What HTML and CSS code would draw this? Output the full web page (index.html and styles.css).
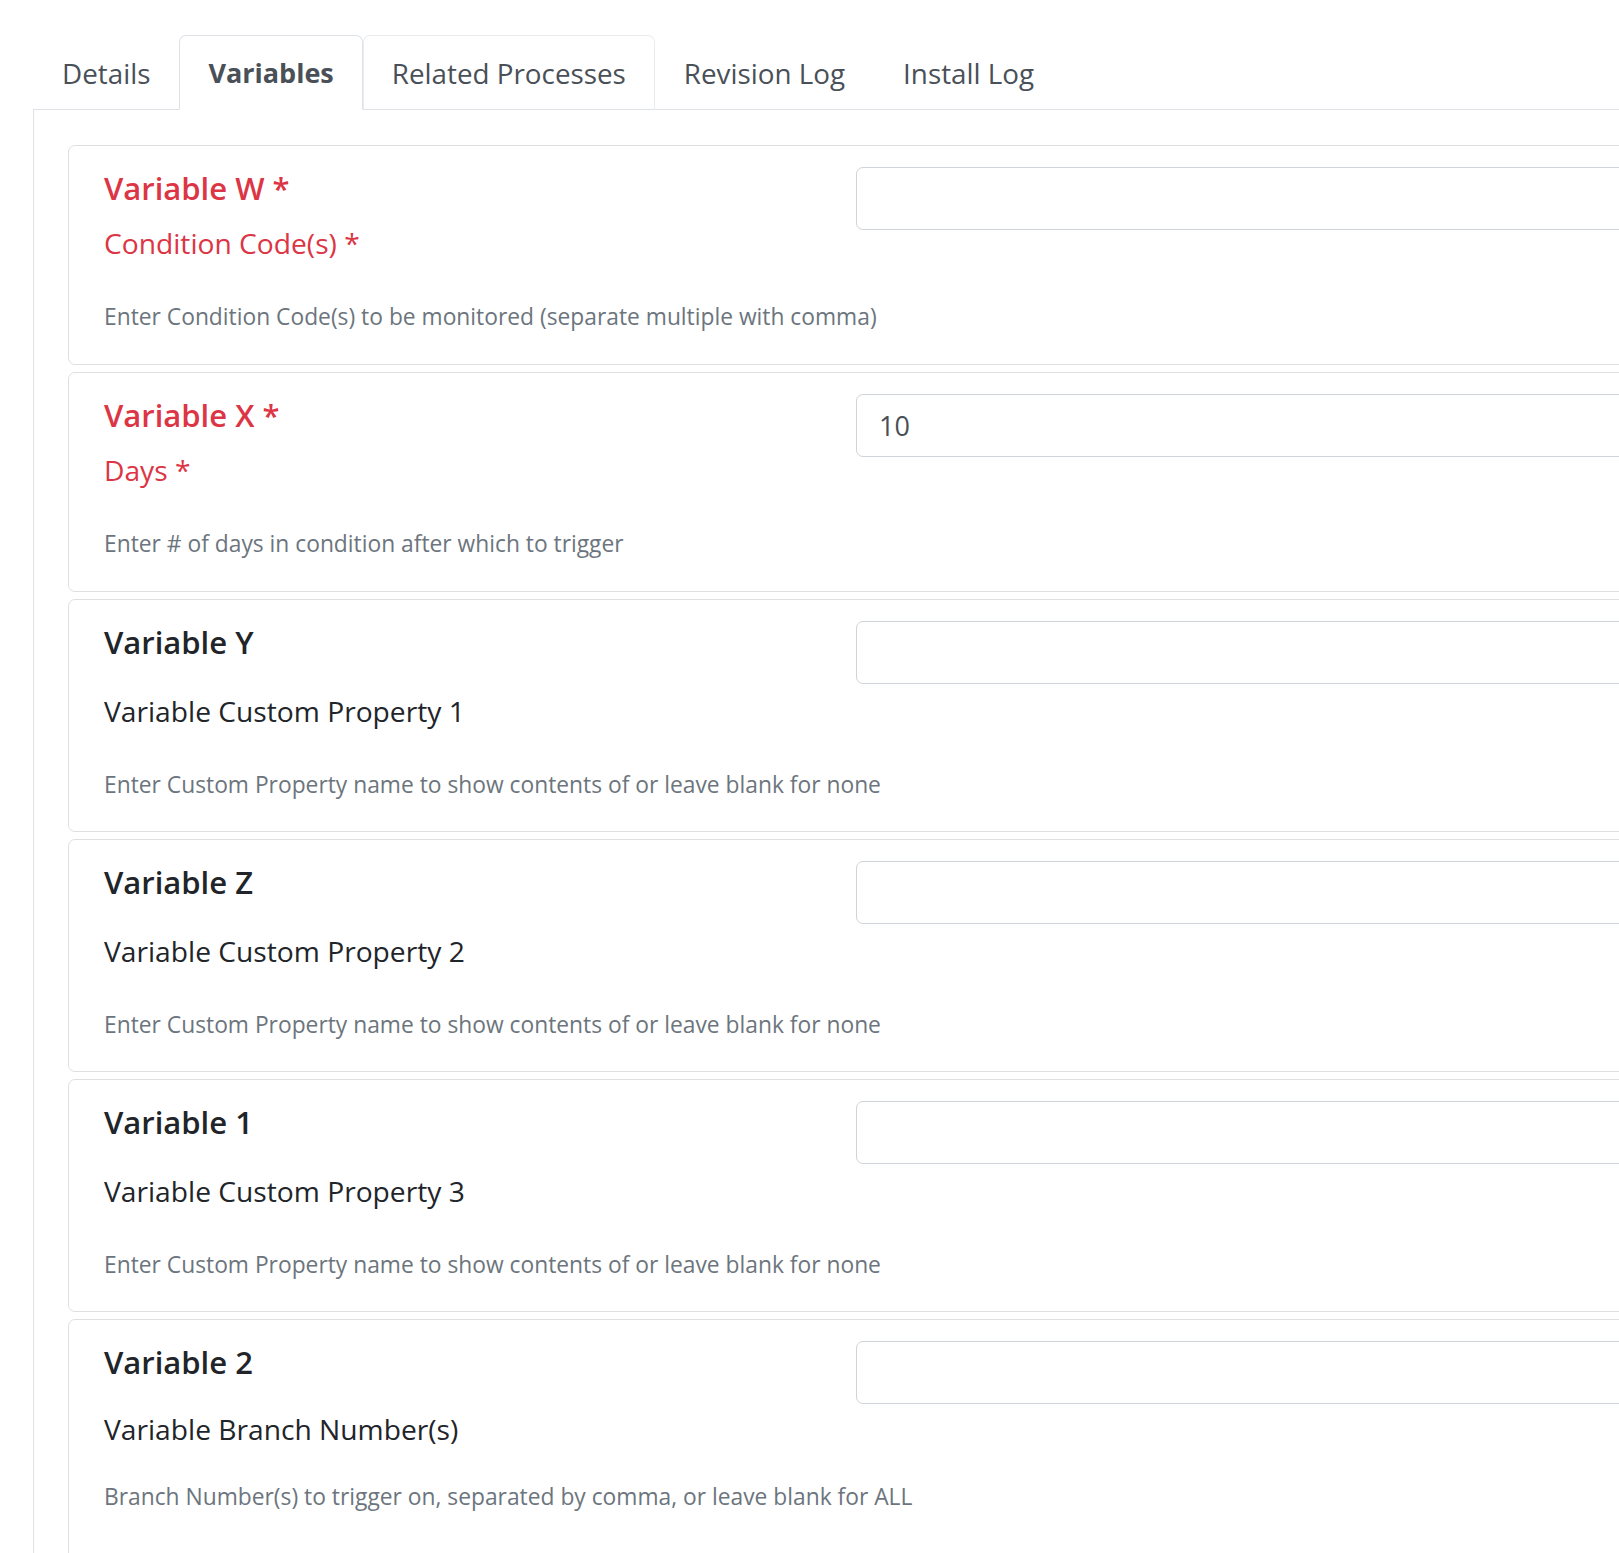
FILE: index.html
```html
<!DOCTYPE html>
<html lang="en">
<head>
    <meta charset="utf-8" />
    <title>Process Variables</title>
    <link rel="stylesheet" href="styles.css">
</head>
<body>
<div class="page">
    <ul class="nav-tabs">
        <li><a class="tab">Details</a></li>
        <li><a class="tab tab-active">Variables</a></li>
        <li><a class="tab tab-hover">Related Processes</a></li>
        <li><a class="tab">Revision Log</a></li>
        <li><a class="tab">Install Log</a></li>
    </ul>
    <div class="tab-panel">
        <div class="var-card required">
            <div class="var-text">
                <h5 class="var-name">Variable W *</h5>
                <label class="var-label">Condition Code(s) *</label>
            </div>
            <input class="var-input" type="text" value="" />
            <small class="var-help">Enter Condition Code(s) to be monitored (separate multiple with comma)</small>
        </div>
        <div class="var-card required">
            <div class="var-text">
                <h5 class="var-name">Variable X *</h5>
                <label class="var-label">Days *</label>
            </div>
            <input class="var-input" type="text" value="10" />
            <small class="var-help">Enter # of days in condition after which to trigger</small>
        </div>
        <div class="var-card">
            <div class="var-text">
                <h5 class="var-name">Variable Y</h5>
                <label class="var-label">Variable Custom Property 1</label>
            </div>
            <input class="var-input" type="text" value="" />
            <small class="var-help">Enter Custom Property name to show contents of or leave blank for none</small>
        </div>
        <div class="var-card">
            <div class="var-text">
                <h5 class="var-name">Variable Z</h5>
                <label class="var-label">Variable Custom Property 2</label>
            </div>
            <input class="var-input" type="text" value="" />
            <small class="var-help">Enter Custom Property name to show contents of or leave blank for none</small>
        </div>
        <div class="var-card">
            <div class="var-text">
                <h5 class="var-name">Variable 1</h5>
                <label class="var-label">Variable Custom Property 3</label>
            </div>
            <input class="var-input" type="text" value="" />
            <small class="var-help">Enter Custom Property name to show contents of or leave blank for none</small>
        </div>
        <div class="var-card last">
            <div class="var-text">
                <h5 class="var-name">Variable 2</h5>
                <label class="var-label">Variable Branch Number(s)</label>
            </div>
            <input class="var-input" type="text" value="" />
            <small class="var-help">Branch Number(s) to trigger on, separated by comma, or leave blank for ALL</small>
        </div>
    </div>
</div>
</body>
</html>
```

FILE: styles.css
```css
html {
    overflow: hidden;
}

body {
    margin: 0;
    background: #fff;
    font-family: "Open Sans", "Noto Sans", Arial, sans-serif;
    color: #212529;
}

.page {
    width: 2000px;
    padding: 35px 0 0 33px;
}

.nav-tabs {
    display: flex;
    list-style: none;
    margin: 0;
    padding: 0;
    border-bottom: 1px solid #dee2e6;
}

.tab {
    display: block;
    margin-bottom: -1px;
    padding: 16.5px 28px;
    font-size: 27.8px;
    line-height: 40px;
    color: #495057;
    border: 1px solid transparent;
    border-radius: 7px 7px 0 0;
}

.tab-active {
    font-weight: 700;
    font-size: 27px;
    background: #fff;
    border-color: #dee2e6 #dee2e6 #fff;
}

.tab-hover {
    border-color: #e9ecef #e9ecef #dee2e6;
}

.tab-panel {
    border: 1px solid #dee2e6;
    border-top: none;
    border-radius: 0 0 7px 7px;
    padding: 35px 34px 40px 34px;
}

.var-card {
    display: grid;
    grid-template-columns: 752px 1fr;
    align-items: start;
    margin-bottom: 7px;
    padding: 21px 35px 30px 35px;
    border: 1px solid #dfdfdf;
    border-radius: 7px;
}

.var-card.required {
    padding-bottom: 31px;
}

.var-card.last {
    padding-bottom: 60px;
}

.var-name {
    margin: 0;
    font-size: 31px;
    line-height: 42px;
    font-weight: 600;
}

.var-label {
    display: block;
    margin-top: 28px;
    font-size: 28.2px;
    line-height: 40px;
}

.required .var-name,
.required .var-label {
    color: #dc3545;
}

.required .var-label {
    margin-top: 14px;
}

.last .var-label {
    margin-top: 26px;
}

.var-input {
    box-sizing: border-box;
    width: 100%;
    height: 63px;
    padding: 0 22px;
    font-family: inherit;
    font-size: 27px;
    color: #495057;
    border: 1px solid #ced4da;
    border-radius: 7px;
    background: #fff;
}

.var-help {
    grid-column: 1 / -1;
    display: block;
    margin-top: 37px;
    font-size: 22.8px;
    line-height: 33px;
    color: #6c757d;
}

.last .var-help {
    margin-top: 31px;
}
```
